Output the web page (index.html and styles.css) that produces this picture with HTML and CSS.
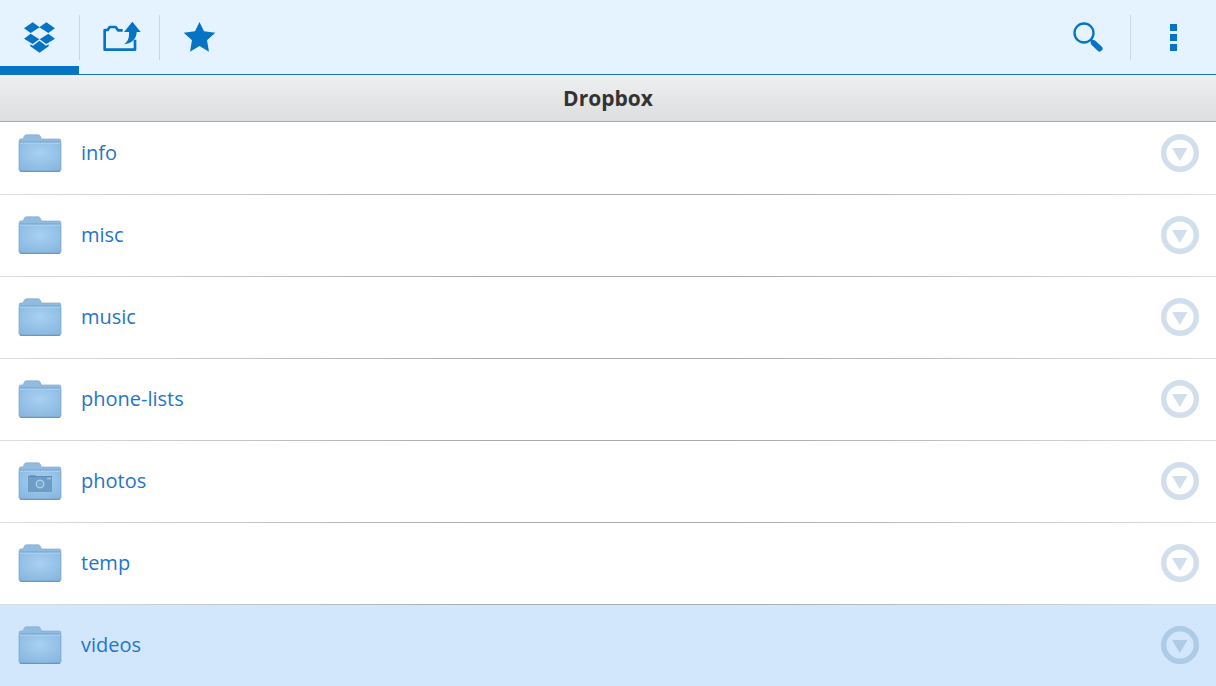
FILE: index.html
```html
<!DOCTYPE html>
<html lang="en">
<head>
  <meta charset="UTF-8" />
  <meta name="viewport" content="width=device-width, initial-scale=1" />
  <title>Dropbox</title>
  <link rel="stylesheet" href="styles.css">
</head>
<body>

  <!-- shared shapes -->
  <svg class="defs" width="0" height="0">
    <defs>
      <radialGradient id="front" cx="0.5" cy="0.35" r="0.75">
        <stop offset="0" stop-color="#a8d1f2" />
        <stop offset="1" stop-color="#86b5dd" />
      </radialGradient>
      <symbol id="folder" viewBox="0 0 44 39">
        <path d="M1.200 36V6.500Q1.200 5 2.500 5H5L6.500 1.800Q7 .8 8.500 .8H20Q21.300 .8 22 1.800L23.500 5H41.500Q42.800 5 42.800 6.500V36Z" fill="#92bbe0" stroke="#7fabd4" stroke-width=".7" />
        <path d="M1.500 8H42.500" stroke="#6f9dc7" stroke-width=".9" />
        <path d="M1.200 9V35.500Q1.200 37.300 2.800 37.300H41.200Q42.800 37.300 42.800 35.500V9Z" fill="url(#front)" stroke="#7dabd4" stroke-width=".7" />
        <path d="M1.700 9.200H42.300" stroke="#b5d8f3" />
        <path d="M2 37.400H42" stroke="#6088ad" stroke-width=".9" />
      </symbol>
      <symbol id="more-circle" viewBox="0 0 38 39">
        <circle cx="19" cy="19" r="16.300" fill="none" stroke="currentColor" stroke-width="5.400" />
        <path d="M11 14H26.500L18.800 27Z" fill="currentColor" />
      </symbol>
    </defs>
  </svg>

  <header class="topbar">
    <nav class="tabs">
      <a href="#files" class="tab active" aria-label="Files">
        <svg class="icon" viewBox="0 0 141 144">
          <path d="M50 28L71 43L44 60L24 46ZM91 28L70 43L97 60L117 46ZM44 62L70 79L50 93L24 77ZM97 62L71 79L91 93L117 77Z" />
          <path d="M43 94L51 98L70.500 83L90 98L98 94V100L70.500 119L43 100Z" />
        </svg>
      </a>
      <a href="#uploads" class="tab" aria-label="Uploads">
        <svg class="icon" viewBox="0 0 141 144">
          <path d="M80 52H66L59 42H41L35 51H26V110H117V80" fill="none" stroke="currentColor" stroke-width="8" stroke-linejoin="round" />
          <path d="M109 26L134 57H122C122 76 108 92 84 94C96 86 100 74 99 57H84Z" />
        </svg>
      </a>
      <a href="#favorites" class="tab" aria-label="Favorites">
        <svg class="icon" viewBox="0 0 141 144">
          <path d="M70.500 27L84 55L118 59L93 82L99 116L70.500 99L42 116L48 82L23 59L57 55Z" />
        </svg>
      </a>
    </nav>
    <div class="actions">
      <button class="action" aria-label="Search">
        <svg class="icon" viewBox="0 0 141 144">
          <circle cx="60" cy="60" r="28.500" fill="none" stroke="currentColor" stroke-width="7" />
          <path d="M80 80L92 92" stroke="currentColor" stroke-width="8" />
          <path d="M89 90L107 107" stroke="currentColor" stroke-width="17" stroke-linecap="round" />
        </svg>
      </button>
      <button class="action" aria-label="Menu">
        <svg class="icon" viewBox="0 0 141 144">
          <path d="M60 33H81V54H60ZM60 63H81V84H60ZM60 93H81V114H60Z" />
        </svg>
      </button>
    </div>
  </header>

  <h1 class="title">Dropbox</h1>

  <main class="files">
    <ul class="list">
      <li class="row">
        <svg class="folder"><use href="#folder" /></svg>
        <a href="#info" class="name">info</a>
        <button class="expand" aria-label="Options for info"><svg><use href="#more-circle" /></svg></button>
      </li>
      <li class="row">
        <svg class="folder"><use href="#folder" /></svg>
        <a href="#misc" class="name">misc</a>
        <button class="expand" aria-label="Options for misc"><svg><use href="#more-circle" /></svg></button>
      </li>
      <li class="row">
        <svg class="folder"><use href="#folder" /></svg>
        <a href="#music" class="name">music</a>
        <button class="expand" aria-label="Options for music"><svg><use href="#more-circle" /></svg></button>
      </li>
      <li class="row">
        <svg class="folder"><use href="#folder" /></svg>
        <a href="#phone-lists" class="name">phone-lists</a>
        <button class="expand" aria-label="Options for phone-lists"><svg><use href="#more-circle" /></svg></button>
      </li>
      <li class="row">
        <svg class="folder" viewBox="0 0 44 39">
          <use href="#folder" />
          <path d="M10 14H11.500L12 13H17L18 14H34V30H10Z" fill="#6d9cc6" />
          <path d="M10 14.500H34" stroke="#5d8cb7" />
          <circle cx="22" cy="22" r="3.800" fill="#76a5ce" stroke="#a9cdec" stroke-width="1.400" />
          <path d="M29 16.500H33" stroke="#a4c9e8" stroke-width="1.500" />
        </svg>
        <a href="#photos" class="name">photos</a>
        <button class="expand" aria-label="Options for photos"><svg><use href="#more-circle" /></svg></button>
      </li>
      <li class="row">
        <svg class="folder"><use href="#folder" /></svg>
        <a href="#temp" class="name">temp</a>
        <button class="expand" aria-label="Options for temp"><svg><use href="#more-circle" /></svg></button>
      </li>
      <li class="row selected">
        <svg class="folder"><use href="#folder" /></svg>
        <a href="#videos" class="name">videos</a>
        <button class="expand" aria-label="Options for videos"><svg><use href="#more-circle" /></svg></button>
      </li>
    </ul>
  </main>

</body>
</html>
```
FILE: styles.css
```css
* {
  box-sizing: border-box;
}

body {
  font-family: 'Open Sans', 'Noto Sans', sans-serif;
  background: #fff;
  margin: 0;
  height: 100vh;
  display: flex;
  flex-direction: column;
  overflow: hidden;
}

button {
  background: none;
  border: none;
  padding: 0;
  cursor: pointer;
}

svg {
  display: block;
}

.defs {
  position: absolute;
}

/* top bar */
.topbar {
  flex: none;
  display: flex;
  justify-content: space-between;
  background: #e4f3ff;
  border-bottom: 1px solid #1273b2;
}

.tabs, .actions {
  display: flex;
}

.tab, .action {
  display: flex;
  align-items: center;
  justify-content: center;
  height: 74px;
  color: #0673c5;
}

.tab {
  width: 79px;
}

.action {
  width: 85px;
}

.tab + .tab, .action + .action {
  width: 80px;
  padding-left: 1px;
  background: linear-gradient(#c5d9e8, #c5d9e8) 0 15px / 1px 45px no-repeat;
}

.action + .action {
  width: 86px;
}

.tab.active {
  background: linear-gradient(#0673c5, #0673c5) bottom / 100% 8px no-repeat;
}

.icon {
  width: 47px;
  height: 48px;
  fill: currentColor;
}

/* folder title */
.title {
  flex: none;
  margin: 0;
  font-size: 21px;
  line-height: 46px;
  text-align: center;
  color: #333;
  background: linear-gradient(#eeeff0, #dddee0);
  border-bottom: 1px solid #a9abad;
}

/* file list, scrolled to its end */
.files {
  flex: 1;
  min-height: 0;
  display: flex;
  flex-direction: column;
  justify-content: flex-end;
  overflow: hidden;
}

.list {
  list-style: none;
  margin: 0;
  padding: 0;
}

.row {
  display: flex;
  align-items: center;
  height: 82px;
  padding: 0 17px 1px 18px;
  background: linear-gradient(to right, #dedede, #aaa 40%, #aaa 60%, #dedede) bottom / 100% 1px no-repeat;
}

.row.selected {
  height: 81px;
  padding-bottom: 0;
  background: #d2e7fb;
}

.folder {
  width: 44px;
  height: 39px;
}

.name {
  flex: 1;
  margin-left: 19px;
  padding-bottom: 2px;
  font-size: 20px;
  line-height: 28px;
  color: #1f75c9;
  text-decoration: none;
}

.expand {
  color: #d1dfed;
}

.expand svg {
  width: 38px;
  height: 39px;
}

.selected .expand {
  color: #adcae7;
}
```
